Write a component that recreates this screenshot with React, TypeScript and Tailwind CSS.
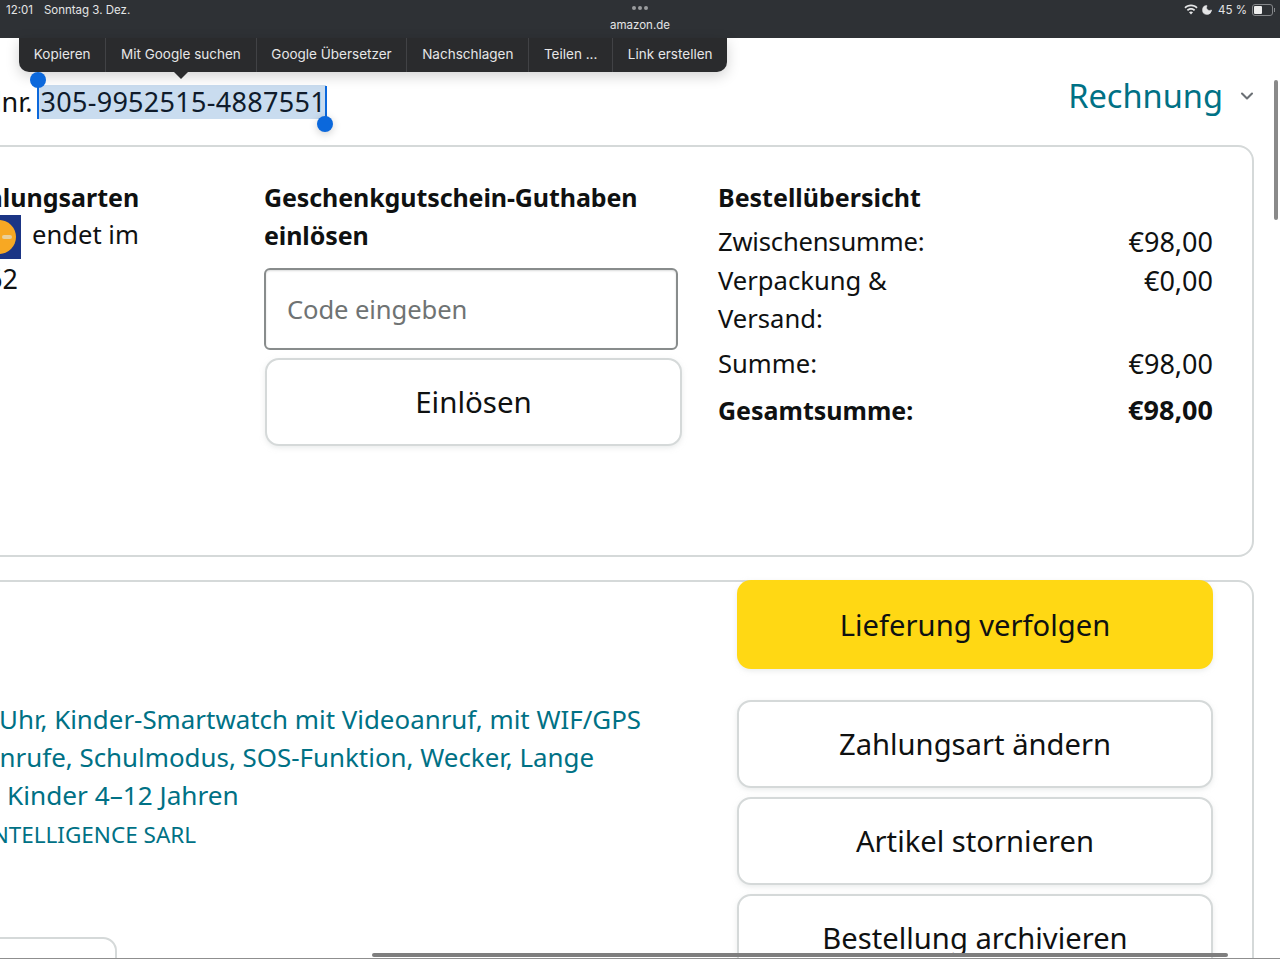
import { ChevronDown, Moon } from 'lucide-react';

const MENU_ITEMS = ['Kopieren', 'Mit Google suchen', 'Google Übersetzer', 'Nachschlagen', 'Teilen ...', 'Link erstellen'];

function StatusBar() {
  return (
    <div className="relative h-[38px] bg-[#2e3135] text-[#e4e5e6] font-['Inter',sans-serif]">
      <div className="flex items-center justify-between h-[19px] pl-[6px] pr-[5px] text-[11.5px]">
        <div className="flex gap-[11px]">
          <span>12:01</span>
          <span>Sonntag 3. Dez.</span>
        </div>
        <div className="flex items-center gap-[3px]">
          <svg width="14" height="11" viewBox="0 0 14 11" fill="currentColor">
            <path d="M7 0.5C4.4 0.5 2.1 1.5 0.4 3.2L1.6 4.5C3 3.1 4.9 2.2 7 2.2s4 .9 5.4 2.3l1.2-1.3C11.9 1.5 9.6.5 7 .5Z" />
            <path d="M7 4C5.4 4 3.9 4.6 2.8 5.7L4 7c.8-.8 1.8-1.2 3-1.2s2.2.4 3 1.2l1.2-1.3C10.1 4.6 8.6 4 7 4Z" />
            <path d="M7 7.4c-.8 0-1.5.3-2 .8l2 2.3 2-2.3c-.5-.5-1.2-.8-2-.8Z" />
          </svg>
          <Moon size={12} fill="currentColor" strokeWidth={1} />
          <span className="ml-[2px]">45 %</span>
          <div className="flex items-center ml-[2px]">
            <div className="w-[21px] h-[12px] rounded-[3px] border border-[#85878a] p-[1px]">
              <div className="w-[8px] h-full rounded-[1px] bg-[#eeeeee]" />
            </div>
            <div className="w-[1px] h-[4px] bg-[#85878a] ml-[1px]" />
          </div>
        </div>
      </div>
      <div className="absolute left-0 right-0 top-[6px] flex justify-center gap-[2px]">
        <div className="w-[4px] h-[4px] rounded-full bg-[#9a9c9e]" />
        <div className="w-[4px] h-[4px] rounded-full bg-[#9a9c9e]" />
        <div className="w-[4px] h-[4px] rounded-full bg-[#9a9c9e]" />
      </div>
      <div className="absolute left-0 right-0 top-[17px] text-center text-[11.5px] leading-4">amazon.de</div>
    </div>
  );
}

function SelectionMenu() {
  return (
    <div className="absolute left-[19px] top-[38px] flex h-[34px] rounded-b-[10px] bg-[#2a2b2d] text-[#e6e6e7] text-[13.5px] shadow-[0_4px_14px_rgba(0,0,0,0.18)] font-['Inter',sans-serif]">
      {MENU_ITEMS.map((item, i) => (
        <div key={item} className={`flex items-center px-[14.75px] pb-[2px] ${i > 0 ? 'border-l border-[#414245]' : ''}`}>
          {item}
        </div>
      ))}
      <div className="absolute left-[155px] top-[34px] w-0 h-0 border-x-[7px] border-x-transparent border-t-[7px] border-t-[#2a2b2d]" />
    </div>
  );
}

function OutlineButton({ label, className }: { label: string; className: string }) {
  return (
    <div className={`flex items-center justify-center h-[88px] rounded-[14px] border-2 border-[#d5d9d9] bg-white text-[#0f1111] shadow-[0_2px_5px_rgba(213,217,217,0.5)] ${className}`}>
      {label}
    </div>
  );
}

function PaymentLogo() {
  return (
    <svg width="44" height="44" viewBox="0 0 44 44">
      <rect width="44" height="44" fill="#1b3585" />
      <circle cx="22" cy="22" r="17" fill="#f7a823" />
      <rect x="25" y="20" width="10" height="4" rx="2" fill="#e9cf9a" />
    </svg>
  );
}

export default function App() {
  return (
    <div className="relative w-[1280px] h-[959px] overflow-hidden bg-white text-[#0f1111] text-[25.6px] leading-[38px] font-['Noto_Sans',sans-serif]">
      <StatusBar />

      <div className="flex items-start justify-between h-[107px] pr-[23px]">
        <div className="-ml-[83px] mt-[47px] text-[27px] leading-[34px] whitespace-nowrap">
          Bestellnr. <span className="inline-block bg-[#c9dcef] pl-[1px] tracking-[0.3px] text-[#0f1b2b]">305-9952515-4887551</span>
        </div>
        <div className="flex items-center gap-[14px] mt-[38px] h-[40px] text-[#007185] text-[32.6px]">
          Rechnung
          <ChevronDown size={20} strokeWidth={2.5} className="text-[#6b7075]" />
        </div>
      </div>

      <div className="-ml-[92px] mr-[26px] h-[412px] flex rounded-[16px] border-2 border-[#d5d9d9] pt-[31px] pl-[40px] pr-[39px]">
        <div className="w-[314px] shrink-0">
          <div className="pl-[7px] font-bold text-[25px]">Zahlungsarten</div>
          <div className="flex items-center h-[44px] -mt-[1px] pl-[27px] gap-[11px]">
            <PaymentLogo />
            <span className="-mt-[4px]">endet im</span>
          </div>
          <div className="mt-[1px] pl-[37px] text-[27px]">62</div>
        </div>

        <div className="w-[454px] shrink-0">
          <div className="font-bold text-[25px] tracking-[-0.1px]">Geschenkgutschein-Guthaben einlösen</div>
          <div className="flex items-center w-[414px] h-[82px] mt-[14px] pl-[21px] pt-[2px] rounded-[6px] border-2 border-[#888c8c] text-[#6f7373] tracking-[-0.1px] shadow-[inset_0_1px_2px_rgba(15,17,17,0.15)]">
            Code eingeben
          </div>
          <OutlineButton label="Einlösen" className="w-[417px] mt-[8px] ml-[1px] text-[29.5px]" />
        </div>

        <div className="flex-1">
          <div className="font-bold text-[25px]">Bestellübersicht</div>
          <div className="flex justify-between mt-[7px]">
            <span className="tracking-[-0.2px]">Zwischensumme:</span>
            <span className="text-[27px]">€98,00</span>
          </div>
          <div className="flex justify-between mt-[1px]">
            <span className="w-[200px]">Verpackung & Versand:</span>
            <span className="text-[27px]">€0,00</span>
          </div>
          <div className="flex justify-between mt-[7px]">
            <span>Summe:</span>
            <span className="text-[27px]">€98,00</span>
          </div>
          <div className="flex justify-between mt-[8px] font-bold">
            <span className="text-[25px]">Gesamtsumme:</span>
            <span className="text-[27px]">€98,00</span>
          </div>
        </div>
      </div>

      <div className="-ml-[92px] mr-[26px] mt-[23px] h-[420px] flex justify-between rounded-[16px] border-2 border-[#d5d9d9] pr-[39px]">
        <div className="pt-[118px] whitespace-nowrap text-[#007185] text-[25.9px]">
          <div className="ml-[89px]">Uhr, Kinder-Smartwatch mit Videoanruf, mit WIF/GPS</div>
          <div className="ml-[73px]">Anrufe, Schulmodus, SOS-Funktion, Wecker, Lange</div>
          <div className="ml-[97px] text-[26.2px]">Kinder 4–12 Jahren</div>
          <div className="ml-[74px] mt-[6px] text-[22.5px] leading-[30px]">INTELLIGENCE SARL</div>
          <div className="w-[207px] h-[60px] mt-[87px] rounded-[14px] border-2 border-[#d5d9d9]" />
        </div>

        <div className="flex flex-col w-[476px] -mt-[2px] text-[29.2px]">
          <div className="flex items-center justify-center h-[89px] rounded-[14px] bg-[#ffd814] shadow-[0_2px_5px_rgba(213,217,217,0.5)]">
            Lieferung verfolgen
          </div>
          <OutlineButton label="Zahlungsart ändern" className="mt-[31px]" />
          <OutlineButton label="Artikel stornieren" className="mt-[9px]" />
          <OutlineButton label="Bestellung archivieren" className="mt-[9px]" />
        </div>
      </div>

      <SelectionMenu />

      {/* selection handles */}
      <div className="absolute left-[37px] top-[80px] w-[2px] h-[39px] bg-[#0b68dc]" />
      <div className="absolute left-[30px] top-[72px] w-[16px] h-[16px] rounded-full bg-[#0b68dc]" />
      <div className="absolute left-[325px] top-[86px] w-[2px] h-[38px] bg-[#0b68dc]" />
      <div className="absolute left-[317px] top-[116px] w-[16px] h-[16px] rounded-full bg-[#0b68dc] shadow-[0_2px_8px_rgba(0,0,0,0.2)]" />

      {/* scrollbars */}
      <div className="absolute left-[1274px] top-[80px] w-[4px] h-[140px] rounded-full bg-[#8a8a8a]" />
      <div className="absolute left-[372px] top-[953px] w-[856px] h-[4px] rounded-full bg-[#7e7e7e]" />
      <div className="absolute left-0 right-0 bottom-0 h-[1px] bg-[#8f8f8f]" />
    </div>
  );
}
